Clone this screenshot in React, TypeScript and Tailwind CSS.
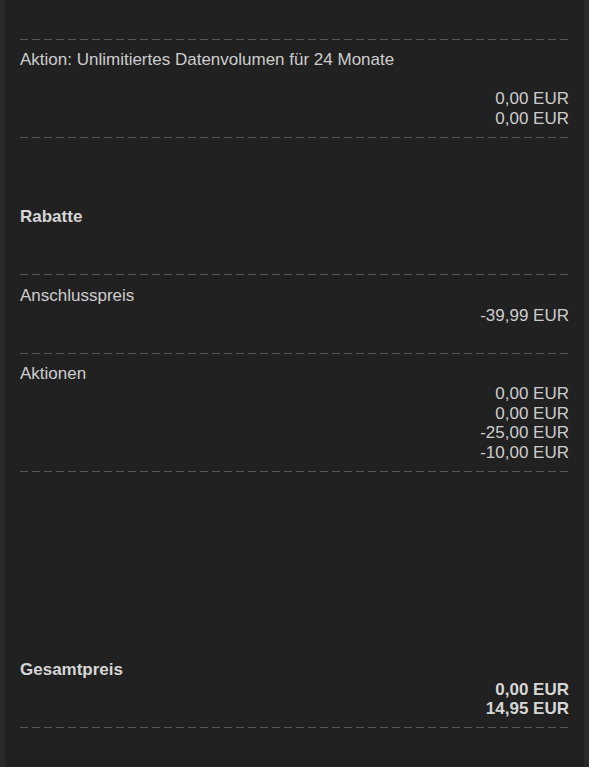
export default function App() {
  const Dash = () => (
    <div className="h-px w-full bg-[linear-gradient(to_right,#575757_8px,transparent_8px)] bg-[length:12px_1px] bg-repeat-x" />
  );

  const Line = ({ children, right, bold }: { children?: React.ReactNode; right?: boolean; bold?: boolean }) => (
    <div className={`h-[19.6px] leading-[19.6px] whitespace-nowrap ${right ? 'text-right' : ''} ${bold ? 'font-bold text-[#d6d6d6]' : ''}`}>
      {children}
    </div>
  );

  return (
    <div className="min-h-[767px] bg-[#2a2a2a] px-[5px] font-['Liberation_Sans',Arial,sans-serif] text-[17px] text-[#cdcdcd]">
      <div className="min-h-[767px] bg-[#212121] px-[15px] pt-[39px] pb-[39px]">
        <Dash />
        <div className="pt-[10px] pb-[8.6px]">
          <Line>Aktion: Unlimitiertes Datenvolumen für 24 Monate</Line>
          <Line />
          <Line right>0,00 EUR</Line>
          <Line right>0,00 EUR</Line>
        </div>
        <Dash />

        <div className="pt-[69px] pb-[47.4px]">
          <Line bold>Rabatte</Line>
        </div>
        <Dash />

        <div className="pt-[11px] pb-[27.8px]">
          <Line>Anschlusspreis</Line>
          <Line right>-39,99 EUR</Line>
        </div>
        <Dash />

        <div className="pt-[10.5px] pb-[8.5px]">
          <Line>Aktionen</Line>
          <Line right>0,00 EUR</Line>
          <Line right>0,00 EUR</Line>
          <Line right>-25,00 EUR</Line>
          <Line right>-10,00 EUR</Line>
        </div>
        <Dash />

        <div className="pt-[188px] pb-[8.2px]">
          <Line bold>Gesamtpreis</Line>
          <Line right bold>0,00 EUR</Line>
          <Line right bold>14,95 EUR</Line>
        </div>
        <Dash />
      </div>
    </div>
  );
}
